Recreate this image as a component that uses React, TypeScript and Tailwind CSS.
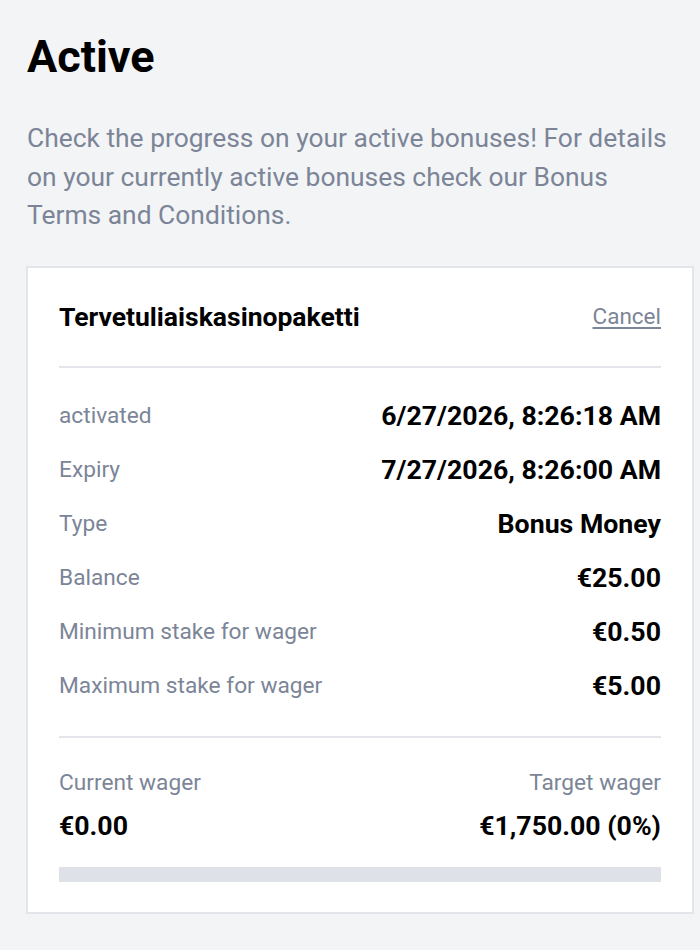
const rows = [
  { label: 'activated', value: '6/27/2026, 8:26:18 AM' },
  { label: 'Expiry', value: '7/27/2026, 8:26:00 AM' },
  { label: 'Type', value: 'Bonus Money' },
  { label: 'Balance', value: '€25.00' },
  { label: 'Minimum stake for wager', value: '€0.50' },
  { label: 'Maximum stake for wager', value: '€5.00' },
];

export default function App() {
  return (
    <div className="min-h-[950px] bg-[#f3f4f6] pl-[27px] pr-[6px] pt-[35px] font-['Roboto',sans-serif]">
      <h1 className="text-[45px] font-bold leading-[44px] text-black">Active</h1>
      <p className="mt-[40px] max-w-[655px] text-[26.4px] leading-[38.5px] text-[#7b8597]">
        Check the progress on your active bonuses! For details on your currently active bonuses check our Bonus Terms and
        Conditions.
      </p>
      <div className="-ml-px mt-[31px] border-2 border-[#e3e5ea] bg-white px-[31px] pb-[30px]">
        <div className="flex h-[100px] items-center justify-between border-b-2 border-[#e3e5ea]">
          <span className="text-[26.5px] font-bold text-black">Tervetuliaiskasinopaketti</span>
          <button className="text-[22.5px] text-[#7b8597] underline underline-offset-[3px]">Cancel</button>
        </div>
        <div className="py-[22px]">
          {rows.map((r) => (
            <div key={r.label} className="flex h-[54px] items-center justify-between">
              <span className="text-[22.7px] text-[#7b8597]">{r.label}</span>
              <span className="text-[26.7px] font-bold text-black">{r.value}</span>
            </div>
          ))}
        </div>
        <div className="border-t-2 border-[#e3e5ea] pt-[29px]">
          <div className="flex justify-between text-[22.7px] leading-[32px] text-[#7b8597]">
            <span>Current wager</span>
            <span>Target wager</span>
          </div>
          <div className="mt-[11px] flex justify-between text-[26.7px] font-bold leading-[32px] text-black">
            <span>€0.00</span>
            <span>€1,750.00 (0%)</span>
          </div>
          <div className="mt-[25px] h-[15px] bg-[#dfe1e8]">
            <div className="h-full bg-[#7b8597]" style={{ width: '0%' }} />
          </div>
        </div>
      </div>
    </div>
  );
}
